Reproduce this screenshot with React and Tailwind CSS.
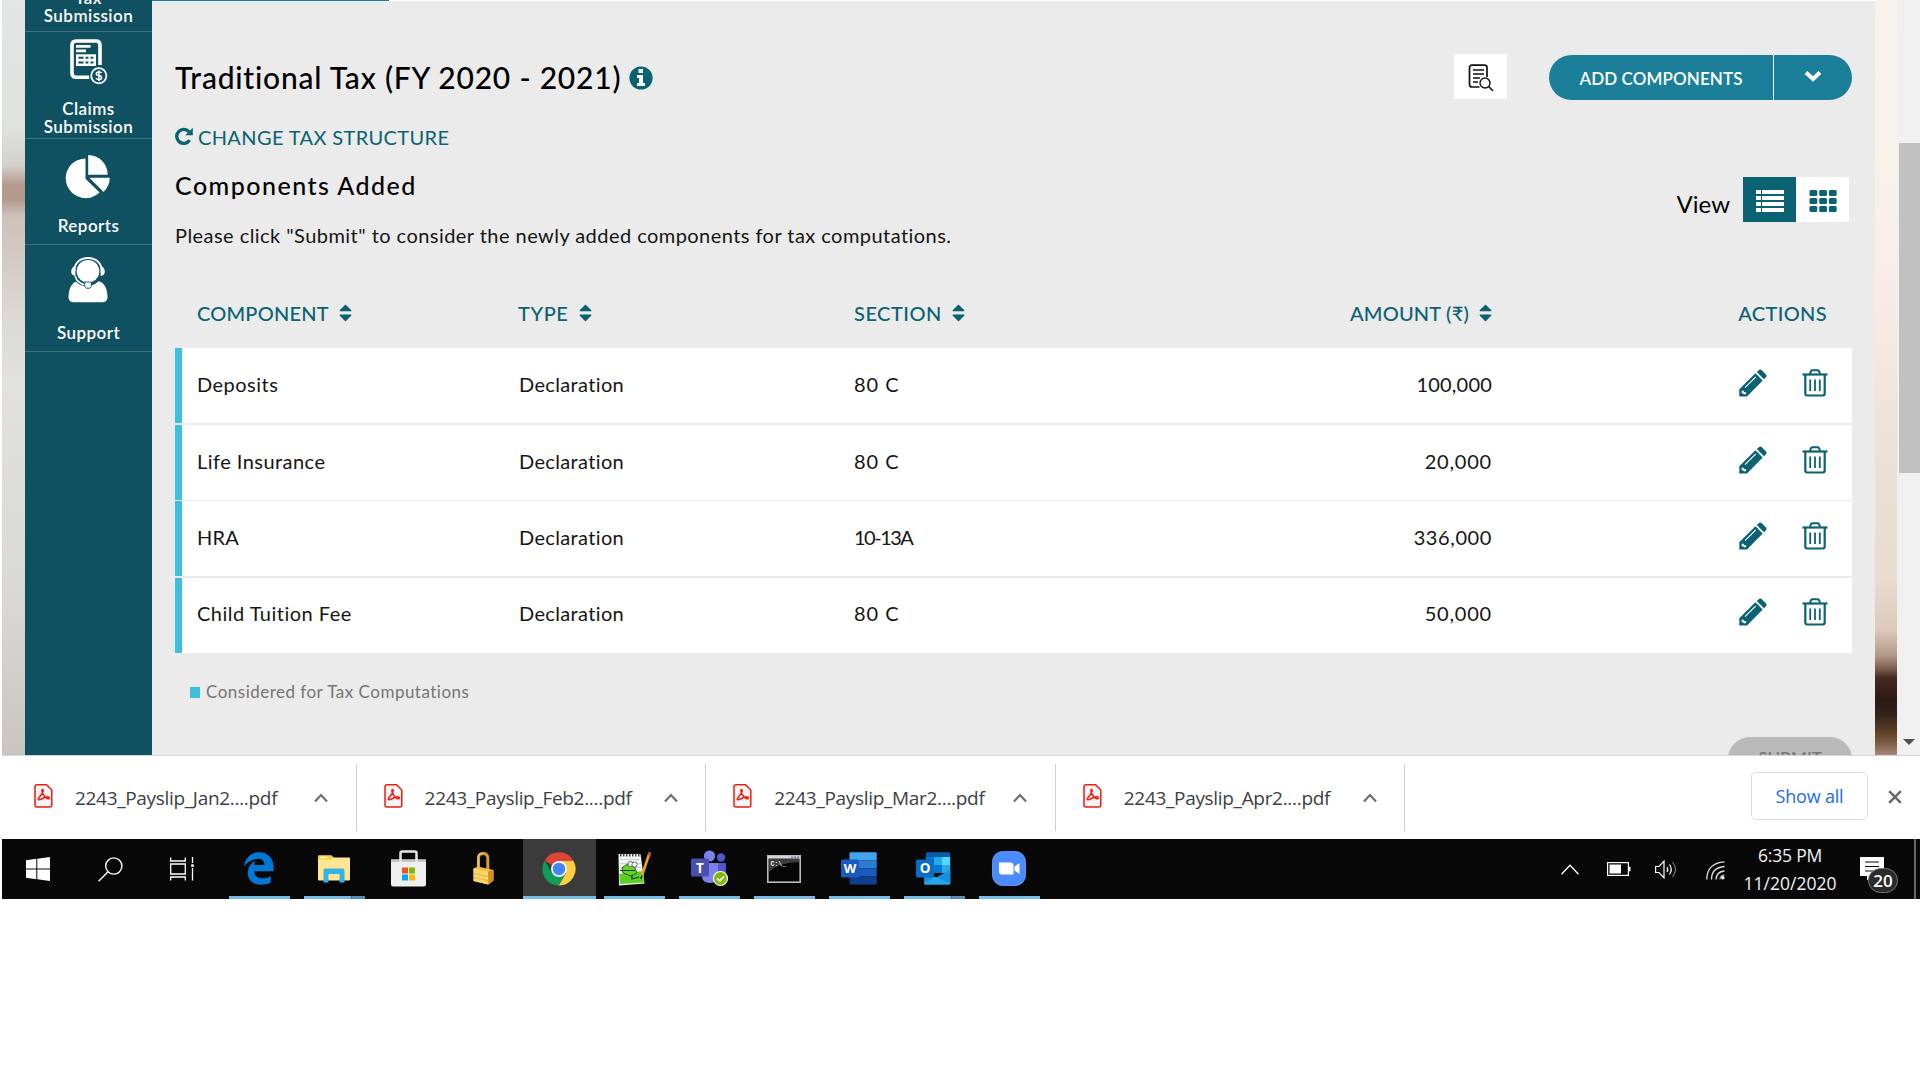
const ROWS = [
  { name: "Deposits", type: "Declaration", section: "80 C", amount: "100,000", layout: "mb-[2px] pb-[3px]", nameTracking: "tracking-[0.48px]", sectionTracking: "tracking-[0.95px]", amountTracking: "tracking-[0.2px]" },
  { name: "Life Insurance", type: "Declaration", section: "80 C", amount: "20,000", layout: "mb-[1px] pb-[4px]", nameTracking: "tracking-[0.46px]", sectionTracking: "tracking-[0.95px]", amountTracking: "tracking-[0.8px]" },
  { name: "HRA", type: "Declaration", section: "10-13A", amount: "336,000", layout: "mb-[2px] pb-[4px]", nameTracking: "tracking-[0.2px]", sectionTracking: "tracking-[-1.5px]", amountTracking: "tracking-[0.6px]" },
  { name: "Child Tuition Fee", type: "Declaration", section: "80 C", amount: "50,000", layout: "pb-[5px]", nameTracking: "tracking-[0.48px]", sectionTracking: "tracking-[0.95px]", amountTracking: "tracking-[0.8px]" },
];

const DOWNLOADS = ["2243_Payslip_Jan2....pdf", "2243_Payslip_Feb2....pdf", "2243_Payslip_Mar2....pdf", "2243_Payslip_Apr2....pdf"];

function SortIcon() {
  return (
    <svg width="13" height="18" viewBox="0 0 13 18" fill="#0a6273">
      <path d="M6.5 .4 12.4 6.3Q12.6 7.2 11.8 7.2H1.2Q.4 7.2 .6 6.3Z" />
      <path d="M6.5 17.4 12.4 11.4Q12.6 10.5 11.8 10.5H1.2Q.4 10.5 .6 11.4Z" />
    </svg>
  );
}

function PencilIcon() {
  return (
    <svg width="28" height="28" viewBox="0 0 28 28">
      <path d="M.3 27.6V20.2L16.4 4.3 23.7 11.5 8 27.6Z" fill="#0a6273" />
      <path d="M17.8 3 20.4.8Q21.5 0 22.6.9L27 5.6Q28 7 27.2 8L25 10.2Z" fill="#0a6273" />
      <path d="M2.6 22.2 4 21.2 5.2 23 7 23.2 7.2 25 5.6 25.6 2.6 23.8Z" fill="#fff" />
      <path d="M6 18.6 16.8 7.9" stroke="#fff" strokeWidth="1.1" fill="none" />
    </svg>
  );
}

function TrashIcon() {
  return (
    <svg width="26" height="28" viewBox="0 0 26 28" fill="none" stroke="#0a6273">
      <path d="M.5 5.5H25.5" strokeWidth="2.2" />
      <path d="M8 5 8.8 2.4Q9.1 1.2 10.3 1.2H15.7Q16.9 1.2 17.2 2.4L18 5" strokeWidth="2" />
      <path d="M3.3 6V24.6Q3.3 26.5 5.2 26.5H20.8Q22.7 26.5 22.7 24.6V6" strokeWidth="2.2" />
      <path d="M8.2 10.5V22M13 10.5V22M17.8 10.5V22" strokeWidth="1.8" />
    </svg>
  );
}

function ClaimsIcon() {
  return (
    <svg width="38" height="46" viewBox="0 0 38 46" fill="none" stroke="#fff">
      <path d="M19.5 38.2H6Q2 38.2 2 34.2V6Q2 2 6 2H26Q30 2 30 6V26" strokeWidth="3.6" />
      <path d="M6 7.3H20.5M6 11.8H16" strokeWidth="2.8" />
      <path d="M6 15.3H26V27H6Z" fill="#fff" stroke="none" />
      <path d="M8.4 18.8H13.5M8.4 23.4H13.5M15.5 18.8H18.4M15.5 23.4H18.4M20.5 18.8H23.4M20.5 23.4H23.4" stroke="#0f5061" strokeWidth="2" />
      <circle cx="28.8" cy="36.7" r="9.8" fill="#0f5061" stroke="none" />
      <circle cx="28.8" cy="36.7" r="7.6" strokeWidth="1.8" />
      <path d="M31.5 34Q30.8 32.9 28.9 32.9 26.3 32.9 26.3 34.8 26.3 36.3 28.9 36.6 31.6 37 31.6 38.7 31.6 40.6 28.9 40.6 26.8 40.6 26 39.2M28.9 31.4V42.2" strokeWidth="1.5" />
    </svg>
  );
}

function ReportsIcon() {
  return (
    <svg width="46" height="44" viewBox="0 0 46 44" fill="#fff">
      <path d="M20.5 3.4V23.8L34.6 37.6A20 19.9 0 1 1 20.5 3.4Z" />
      <path d="M23.2 0A19.6 19.8 0 0 1 42.7 19.8H23.2Z" />
      <path d="M24.4 22.8H44.8Q44.6 31 38.6 37Z" />
    </svg>
  );
}

function SupportIcon() {
  return (
    <svg width="40" height="46" viewBox="0 0 40 46">
      <path d="M12 23.5C4 24.5 .6 31 .5 40Q.5 45.3 6 45.3H34Q39.5 45.3 39.5 40C39.4 31 36 24.5 28 23.5Z" fill="#fff" />
      <circle cx="20" cy="14.8" r="14" fill="#0f5061" />
      <circle cx="20" cy="14.3" r="11.3" fill="#fff" />
      <path d="M6.3 14C6.3 5.6 12.4 1 20 1S33.7 5.6 33.7 14" fill="none" stroke="#fff" strokeWidth="1.9" />
      <path d="M7.4 8.5V19Q3.2 18.5 3.2 14.5T7.4 8.5ZM32.6 8.5V19Q36.8 18.5 36.8 14.5T32.6 8.5Z" fill="#fff" />
      <path d="M7 18.5Q9 26.5 17.5 27.8" fill="none" stroke="#0f5061" strokeWidth="3.4" />
      <path d="M7 18.5Q9 26.5 17.5 27.8" fill="none" stroke="#fff" strokeWidth="1.6" />
      <path d="M16.7 25H23.3V29.5L21.8 31.2H18.2L16.7 29.5Z" fill="#fff" stroke="#0f5061" strokeWidth=".9" />
    </svg>
  );
}

function PdfIcon() {
  return (
    <svg width="19" height="24" viewBox="0 0 19 24" fill="none" stroke="#f01a10">
      <path d="M3 .8H12.6L17.8 6V21Q17.8 23 15.8 23H3Q1 23 1 21V2.8Q1 .8 3 .8Z" fill="#f6f4f4" strokeWidth="1.5" />
      <path d="M4.2 15.5C3.5 13.5 8.5 11.5 9.2 6.8 9.3 5 7.6 5.2 7.9 7 8.5 10.5 11.5 14.2 14.2 14.7 16 14.8 15.5 12.7 13.7 12.7 10.5 12.6 5.5 16.9 4.2 15.5Z" strokeWidth="1.5" />
    </svg>
  );
}

function SideItem({ h, children }) {
  return <div className={"flex flex-col items-center border-b border-[#42727f] " + h}>{children}</div>;
}

function Sidebar() {
  const label = "text-center text-[17px] font-semibold leading-[18px] tracking-[0.45px]";
  return (
    <nav className="flex w-[127px] shrink-0 flex-col bg-[#0f5061] text-white">
      <SideItem h="h-[32px]">
        <span className={"-mt-[11px] " + label}>Tax<br />Submission</span>
      </SideItem>
      <SideItem h="h-[107px]">
        <div className="mt-[7px]"><ClaimsIcon /></div>
        <span className={"mt-[15px] " + label}>Claims<br />Submission</span>
      </SideItem>
      <SideItem h="h-[106px]">
        <div className="mr-[2px] mt-[16px]"><ReportsIcon /></div>
        <span className={"mt-[18px] " + label}>Reports</span>
      </SideItem>
      <SideItem h="h-[107px]">
        <div className="mr-[2px] mt-[12px]"><SupportIcon /></div>
        <span className={"mt-[21px] " + label}>Support</span>
      </SideItem>
    </nav>
  );
}

function Header() {
  return (
    <div className="mt-[53px] flex h-[46px] items-center">
      <h1 className="text-[30px] font-medium leading-none tracking-[0.78px] text-black">Traditional Tax (FY 2020 - 2021)</h1>
      <svg className="ml-[8px] mt-[2px]" width="24" height="24" viewBox="0 0 24 24">
        <circle cx="12" cy="12" r="11.6" fill="#0a6273" />
        <path d="M9.5 3H14V7H9.5ZM8 9H14V17H16V20H8V17H10V12H8Z" fill="#fff" />
      </svg>
      <button className="-mt-[1px] ml-auto flex h-[45px] w-[53px] items-center justify-center bg-white">
        <svg width="26" height="28" viewBox="0 0 26 28" fill="none" stroke="#111" className="ml-[1px] mt-[3px]">
          <path d="M11.5 23H4Q1.5 23 1.5 20.5V3.5Q1.5 1.2 4 1.2H16.5Q19 1.2 19 3.5V13" strokeWidth="1.7" />
          <path d="M5 6H16M5 10H16M5 14H12M5 18H10" strokeWidth="1.5" />
          <circle cx="17" cy="19" r="5" strokeWidth="1.4" />
          <path d="M20.7 22.5 25 27" strokeWidth="1.6" />
        </svg>
      </button>
      <div className="ml-[42px] mt-[1px] flex h-[45px] w-[303px] overflow-hidden rounded-[22.5px] bg-[#1b7f9a] text-white">
        <button className="flex w-[225px] items-center justify-center border-r border-white pt-[2px] text-[17px] font-semibold leading-none tracking-[0.1px]">ADD COMPONENTS</button>
        <button className="flex flex-1 items-center justify-center">
          <svg width="18" height="12" viewBox="0 0 18 12" className="-mt-[3px]"><path d="M2 2.5 9 9 16 2.5" fill="none" stroke="#fff" strokeWidth="4" /></svg>
        </button>
      </div>
    </div>
  );
}

const COLUMNS = "grid grid-cols-[321px_336px_319px_319px_1fr] items-center";

function TableHead() {
  return (
    <div className={COLUMNS + " mt-[20px] h-[68px] pb-[2px] pl-[22px] pr-[25px] text-[20px] font-medium leading-none text-[#0a6273]"}>
      <span className="flex items-center gap-[10px] tracking-[0.2px]">COMPONENT<SortIcon /></span>
      <span className="flex items-center gap-[10px] tracking-[0.6px]">TYPE<SortIcon /></span>
      <span className="flex items-center gap-[10px] tracking-[0.5px]">SECTION<SortIcon /></span>
      <span className="flex items-center justify-end gap-[10px] tracking-[0.2px]">AMOUNT (₹)<SortIcon /></span>
      <span className="text-right tracking-[0.35px]">ACTIONS</span>
    </div>
  );
}

function Row({ row }) {
  return (
    <div className={COLUMNS + " h-[75px] border-l-[7px] border-[#3dbfdf] bg-white pl-[15px] pr-[24px] text-[20px] leading-none text-[#151515] " + row.layout}>
      <span className={row.nameTracking}>{row.name}</span>
      <span className="pl-px tracking-[0.35px]">{row.type}</span>
      <span className={row.sectionTracking}>{row.section}</span>
      <span className={"text-right " + row.amountTracking}>{row.amount}</span>
      <span className="-mt-[2px] flex justify-end gap-[35px]"><PencilIcon /><TrashIcon /></span>
    </div>
  );
}

function Content() {
  return (
    <main className="flex h-full w-[1723px] shrink-0 flex-col bg-[#ebebeb]">
      <div className="flex h-px shrink-0 bg-white"><div className="w-[237px] bg-[#1b7f9a]" /></div>
      <div className="flex flex-1 flex-col px-[23px]">
        <Header />
        <a className="-ml-px mt-[23px] flex h-[28px] items-center text-[20px] leading-none tracking-[0.37px] text-[#0a6273]">
          <svg width="19" height="19" viewBox="0 0 19 19" className="mr-[5px] -mt-[1px]">
            <path d="M15.6 13.2A7 7 0 1 1 15 4.8" fill="none" stroke="#0a6273" strokeWidth="3.4" />
            <path d="M18.8 .8V8.3H11.3Z" fill="#0a6273" />
          </svg>
          CHANGE TAX STRUCTURE
        </a>
        <div className="mt-px flex h-[108px] justify-between">
          <div className="text-black">
            <h2 className="mt-[18px] text-[25px] font-medium leading-[30px] tracking-[1.48px]">Components Added</h2>
            <p className="mt-[21px] text-[20px] leading-[28px] tracking-[0.45px] text-[#151515]">Please click "Submit" to consider the newly added components for tax computations.</p>
          </div>
          <div className="mr-[3px] mt-[25px] flex h-[45px]">
            <span className="mr-[13px] mt-[9px] text-[24px] leading-[36px] text-black">View</span>
            <button className="flex w-[53px] items-center justify-center bg-[#0a6273]">
              <svg width="28" height="22" viewBox="0 0 28 22" fill="#fff" className="mt-[3px]">
                {[0, 6, 12, 18].map((y) => (
                  <g key={y}><rect x="0" y={y} width="5" height="4" /><rect x="6" y={y} width="22" height="4" /></g>
                ))}
              </svg>
            </button>
            <button className="flex w-[53px] items-center justify-center bg-white">
              <svg width="28" height="22" viewBox="0 0 28 22" fill="#0a6273" className="mt-[3px]">
                {[0, 8, 16].map((y) => [0.5, 10.2, 19.9].map((x) => <rect key={x + "-" + y} x={x} y={y} width="7.8" height="6" rx="1.5" />))}
              </svg>
            </button>
          </div>
        </div>
        <TableHead />
        {ROWS.map((row) => <Row key={row.name} row={row} />)}
        <div className="mt-[29px] flex h-[19px] items-center pl-[15px] text-[17px] leading-none tracking-[0.49px] text-[#757575]">
          <span className="mr-[6px] mt-[1px] h-[11px] w-[10px] bg-[#3dbfdf]" />
          Considered for Tax Computations
        </div>
        <button className="mt-[36px] flex h-[43px] w-[124px] shrink-0 items-center justify-center self-end rounded-t-[22px] bg-[#b9b9b9] text-[17px] font-medium leading-none text-[#757575]">SUBMIT</button>
      </div>
    </main>
  );
}

function Scrollbar() {
  return (
    <div className="flex w-[23px] shrink-0 flex-col items-end bg-[#f0f0f0]">
      <div className="mt-[143px] h-[330px] w-[21px] bg-[#c1c1c1]" />
      <svg width="12" height="6" viewBox="0 0 12 6" className="mb-[10px] mr-[5px] mt-auto"><path d="M0 0H12L6 6Z" fill="#505050" /></svg>
    </div>
  );
}

function DownloadBar() {
  return (
    <div className="flex h-[84px] items-center border-t border-[#d4d5d9] bg-white pl-[5px] font-['Open_Sans',sans-serif]">
      {DOWNLOADS.map((name) => (
        <div key={name} className="flex h-[67px] w-[349.6px] items-center border-r-[1.5px] border-[#cfcfcf] pl-[27px]">
          <span className="-mt-[3px] mr-[22px]"><PdfIcon /></span>
          <span className="mt-[2px] w-[239px] whitespace-nowrap text-[19px] leading-none tracking-[-0.31px] text-[#3c4043]">{name}</span>
          <svg width="14" height="10" viewBox="0 0 14 10"><path d="M1 8.5 7 2 13 8.5" fill="none" stroke="#6b6e72" strokeWidth="2.2" /></svg>
        </div>
      ))}
      <button className="-mt-[3px] ml-auto flex h-[48px] w-[117px] items-center justify-center rounded-[5px] border border-[#dadce0] text-[18px] leading-none tracking-[-0.2px] text-[#1a6cf0]">Show all</button>
      <svg width="14" height="14" viewBox="0 0 14 14" className="-mt-[2px] ml-[20px] mr-[18px]"><path d="M1.2 1.2 12.8 12.8M12.8 1.2 1.2 12.8" stroke="#66696d" strokeWidth="2.5" /></svg>
    </div>
  );
}

const ICONS = {
  edge: (
    <svg width="30" height="33" viewBox="0 0 30 33">
      <path d="M.2 14.5C1.2 6 7 .3 15 .3 24 .3 29.6 6.5 29.6 15V19.2H10.2C10.3 24 14 26.3 18.5 26.3 21.8 26.3 24.5 25.4 26.7 24V30.6C24 32 21 32.8 17 32.8 9 32.8 3.8 28 3.8 21 3.8 15.5 6.5 11.3 11.5 8.7 10.6 10 10.2 11.3 10.1 12.9H20.4C20.4 9 18.4 6.7 14.6 6.7 9 6.7 3.5 9.8 .2 14.5Z" fill="#0078d7" />
    </svg>
  ),
  folder: (
    <svg width="32" height="28" viewBox="0 0 32 28">
      <path d="M0 1.5Q0 .5 1 .5H13.5L15.5 2.5H31Q32 2.5 32 3.5V24.5Q32 25.5 31 25.5H1Q0 25.5 0 24.5Z" fill="#ffe694" />
      <path d="M0 1.5Q0 .5 1 .5H13.5Q15.5 2.5 13.5 4.5H0Z" fill="#fccb2f" />
      <path d="M2 2.5H9" stroke="#fff" strokeWidth="1.5" />
      <path d="M5.5 27.5V15.5Q5.5 13.5 7.5 13.5H24.5Q26.5 13.5 26.5 15.5V27.5H21.5V19H10.5V27.5Z" fill="#35b2e6" />
    </svg>
  ),
  store: (
    <svg width="35" height="37" viewBox="0 0 35 37">
      <path d="M0 9.5H35V34.5Q35 36.5 33 36.5H2Q0 36.5 0 34.5Z" fill="#efefef" />
      <path d="M0 9.5H35V12H0Z" fill="#c4c4c4" />
      <path d="M9.5 12V3Q9.5 1.5 11 1.5H24Q25.5 1.5 25.5 3V12" fill="none" stroke="#e6e6e6" strokeWidth="2.5" />
      <path d="M11 17.5H17V23.5H11Z" fill="#f25022" /><path d="M18 17.5H24V23.5H18Z" fill="#7fba00" />
      <path d="M11 24.5H17V30.5H11Z" fill="#00a4ef" /><path d="M18 24.5H24V30.5H18Z" fill="#ffb900" />
    </svg>
  ),
  lock: (
    <svg width="21" height="33" viewBox="0 0 21 33">
      <path d="M5.5 17V6Q5.5 1.5 10 1.5T14.8 6V19" fill="none" stroke="#d9a02c" strokeWidth="3" />
      <path d="M5 16V6Q5.2 1.2 10 1" fill="none" stroke="#f9dd80" strokeWidth="1" />
      <path d="M.5 16.5 5 14.5 20.5 18V28.5L15.5 32.5 .5 29Z" fill="#f3bb45" />
      <path d="M.5 16.5 15 19.5V32.5L.5 29Z" fill="#fbd56a" />
      <path d="M1 21.5 15 24.5M1 25.5 15 28.5" stroke="#eab043" strokeWidth="1" />
      <path d="M15 19.5 20.5 18V28.5L15.5 32.5Z" fill="#d48f22" />
    </svg>
  ),
  chrome: (
    <svg width="34" height="34" viewBox="0 0 34 34">
      <path d="M17 17 2.6 8.7A16.6 16.6 0 0 1 31.4 8.7Z" fill="#db4437" />
      <path d="M17 9H31.5A16.6 16.6 0 0 1 16.6 33.6L24 21Z" fill="#ffcd40" />
      <path d="M2.6 8.7A16.6 16.6 0 0 0 16.6 33.6L24 21 10 21Z" fill="#0f9d58" />
      <path d="M17 9H31.5L30.5 7 17 6Z" fill="#db4437" />
      <circle cx="17" cy="17" r="8" fill="#f1f1f1" /><circle cx="17" cy="17" r="6.2" fill="#4285f4" />
    </svg>
  ),
  notepad: (
    <svg width="34" height="34" viewBox="0 0 34 34">
      <path d="M1.5 2H23.5L27.5 31.5 2 33.5Z" fill="#f7f7f3" />
      <path d="M2.2 22 26 19 27 30.5 3 32Z" fill="#5ccf26" />
      <path d="M3 7.5H23M3 11.5H24M3 15.5H24" stroke="#b7d6e6" strokeWidth="1" />
      <path d="M3 3H23" stroke="#444" strokeWidth="3" strokeDasharray="1.5 1.5" />
      <path d="M5 16Q8 12 14 12L18 16 20 21 14 24 6 21Z" fill="#62d624" stroke="#1b3b12" strokeWidth=".8" />
      <circle cx="13.5" cy="12" r="2.6" fill="#fff" stroke="#444" strokeWidth=".8" /><circle cx="17.5" cy="12.5" r="2.6" fill="#fff" stroke="#444" strokeWidth=".8" />
      <path d="M3 18.5H18M15 23V27L22 25" stroke="#173c10" strokeWidth="1.2" fill="none" />
      <path d="M32.5 1 24.5 25" stroke="#e8a52a" strokeWidth="2.6" /><path d="M33.2 0 32.2 3.5" stroke="#b5473f" strokeWidth="3" /><path d="M24.9 23.5 24 27" stroke="#333" strokeWidth="1.5" />
    </svg>
  ),
  teams: (
    <svg width="38" height="37" viewBox="0 0 38 37">
      <circle cx="18.5" cy="6" r="5.6" fill="#7b83eb" /><circle cx="30" cy="7.5" r="4.2" fill="#5059c9" />
      <path d="M27 13H34Q35 13 35 14V24Q35 29 30 29H27Z" fill="#5059c9" />
      <path d="M11 13H27V24Q27 33 19 33T11 26Z" fill="#7b83eb" />
      <rect x="0" y="8.5" width="18" height="18" rx="1.5" fill="#474fb5" />
      <text x="9" y="22.5" textAnchor="middle" fontFamily="Open Sans, sans-serif" fontWeight="700" fontSize="13.5" fill="#fff">T</text>
      <circle cx="29.5" cy="28.5" r="7.6" fill="#fff" /><circle cx="29.5" cy="28.5" r="6.5" fill="#7fba00" />
      <path d="M26 28.5 28.7 31 33.2 26.3" fill="none" stroke="#fff" strokeWidth="1.9" />
    </svg>
  ),
  cmd: (
    <svg width="34" height="28" viewBox="0 0 34 28">
      <rect x=".8" y=".8" width="32.4" height="26.4" fill="#050505" stroke="#b9bcc2" strokeWidth="1.6" />
      <path d="M1 1H33V3.6H1Z" fill="#d3d5d9" /><path d="M24 2.2H32" stroke="#667" strokeWidth="1.2" strokeDasharray="2 1" />
      <path d="M2 4H32V7Q10 8 2 17Z" fill="#3c3c3c" />
      <text x="3.5" y="11" fontFamily="Liberation Mono, monospace" fontWeight="700" fontSize="6.5" fill="#f2f2f2">C:\_</text>
    </svg>
  ),
  word: (
    <svg width="36" height="33" viewBox="0 0 36 33">
      <path d="M8.5 1.5Q8.5 .3 9.7 .3H34.5Q35.7 .3 35.7 1.5V8.5H8.5Z" fill="#41a5ee" />
      <path d="M8.5 8.5H35.7V16.5H8.5Z" fill="#2b7cd3" /><path d="M8.5 16.5H35.7V24.5H8.5Z" fill="#185abd" />
      <path d="M8.5 24.5H35.7V31.3Q35.7 32.5 34.5 32.5H9.7Q8.5 32.5 8.5 31.3Z" fill="#103f91" />
      <rect x="0" y="7.5" width="18" height="18" rx="1.5" fill="#185abd" />
      <text x="9" y="21.2" textAnchor="middle" fontFamily="Open Sans, sans-serif" fontWeight="700" fontSize="13" fill="#fff">W</text>
    </svg>
  ),
  outlook: (
    <svg width="36" height="33" viewBox="0 0 36 33">
      <path d="M10 1.5Q10 .3 11.2 .3H33Q34.2 .3 34.2 1.5V5H10Z" fill="#0a5ea8" />
      <path d="M10 5H18V13H10Z" fill="#0078d4" /><path d="M18 5H26V13H18Z" fill="#28a8ea" /><path d="M26 5H34.2V13H26Z" fill="#50d9ff" />
      <path d="M10 13H18V21H10Z" fill="#0a5ea8" /><path d="M18 13H26V21H18Z" fill="#0078d4" /><path d="M26 13H34.2V21H26Z" fill="#28a8ea" />
      <path d="M8 20 20 25.5 34.5 17.5V31Q34.5 32.5 33 32.5H9.5Q8 32.5 8 31Z" fill="#1490df" />
      <path d="M19 25 34.5 31.5Q34 32.5 33 32.5H9.5Q8 32.5 8 31.5Z" fill="#28a8ea" />
      <rect x="0" y="7.5" width="18" height="18" rx="1.5" fill="#0a6cc4" />
      <text x="9" y="21.2" textAnchor="middle" fontFamily="Open Sans, sans-serif" fontWeight="700" fontSize="13.5" fill="#fff">O</text>
    </svg>
  ),
  zoom: (
    <svg width="34" height="35" viewBox="0 0 34 35">
      <rect x=".5" y=".5" width="33" height="34" rx="10" fill="#4a8cff" stroke="#6aa2ff" strokeWidth=".8" />
      <path d="M7 11.5H18.5Q21.5 11.5 21.5 14.5V23.5H10Q7 23.5 7 20.5Z" fill="#fff" />
      <path d="M22.5 15.5 27.5 12V23L22.5 19.5Z" fill="#fff" />
    </svg>
  ),
};

const APPS = [
  { id: "edge", line: "full" }, { id: "folder", line: "multi" }, { id: "store" }, { id: "lock" },
  { id: "chrome", line: "active" }, { id: "notepad", line: "full" }, { id: "teams", line: "full" },
  { id: "cmd", line: "full" }, { id: "word", line: "full" }, { id: "outlook", line: "multi" }, { id: "zoom", line: "full" },
];

function TaskbarApp({ app }) {
  const active = app.line === "active";
  return (
    <div className={"flex h-[60px] w-[75px] flex-col items-center " + (active ? "px-px" : "px-[7px]")}>
      <div className={"flex w-full flex-1 items-center justify-center pt-[2px] " + (active ? "bg-[#3b3b3b]" : "")}>
        <span className={app.id === "teams" ? "" : "mr-[2px]"}>{ICONS[app.id]}</span>
      </div>
      <div className="flex h-[3px] w-full">
        {app.line && <div className="flex-1 bg-[#76b9ed]" />}
        {app.line === "multi" && <div className="w-[14px] border-l border-[#3e6786] bg-[#5a8db6]" />}
      </div>
    </div>
  );
}

function Taskbar() {
  return (
    <footer className="flex h-[60px] items-center bg-[#080808] font-['Open_Sans',sans-serif] text-white">
      <svg width="24" height="24" viewBox="0 0 24 24" fill="#fff" className="ml-[24px]">
        <path d="M0 3.3 10.3 1.8V11.5H0ZM11.3 1.7 24 0V11.5H11.3ZM0 12.5H10.3V22.2L0 20.7ZM11.3 12.5H24V24L11.3 22.3Z" />
      </svg>
      <svg width="25" height="25" viewBox="0 0 25 25" fill="none" stroke="#fff" strokeWidth="1.4" className="ml-[48px]">
        <circle cx="15.8" cy="9" r="8.1" /><path d="M10 14.8 .6 24.3" />
      </svg>
      <svg width="25" height="24" viewBox="0 0 25 24" fill="none" stroke="#fff" strokeWidth="1.3" className="ml-[47px]">
        <path d="M.7 .5V4H15.3V.5M.7 23.5V20H15.3V23.5M.7 7H15.3V17H.7ZM22.5 0V6M22.5 11V23.5" /><rect x="21.2" y="7.3" width="2.6" height="2.6" fill="#fff" stroke="none" />
      </svg>
      <div className="ml-[27px] flex">
        {APPS.map((app) => <TaskbarApp key={app.id} app={app} />)}
      </div>
      <div className="ml-auto flex h-full items-center">
        <svg width="18" height="11" viewBox="0 0 18 11" fill="none" stroke="#fff" strokeWidth="1.3" className="mr-[28px]"><path d="M.5 10.3 9 1.3 17.5 10.3" /></svg>
        <svg width="24" height="14" viewBox="0 0 24 14" fill="none" stroke="#fff" strokeWidth="1.2" className="mr-[24px]">
          <rect x=".6" y=".6" width="20.8" height="12.8" /><path d="M2.5 2.5H14V11.5H2.5ZM22 4.8H23.5V9.2H22Z" fill="#fff" stroke="none" />
        </svg>
        <svg width="23" height="19" viewBox="0 0 23 19" fill="none" stroke="#fff" strokeWidth="1.2" className="mr-[28px]">
          <path d="M.6 6.5H4L9 1.2V17.8L4 12.5H.6Z" /><path d="M12 7Q13.5 9.5 12 12M14.5 4.5Q18 9.5 14.5 14.5" /><path d="M17.5 2Q23.5 9.5 17.5 17" stroke="#777" />
        </svg>
        <svg width="19" height="19" viewBox="0 0 19 19" fill="none" stroke="#ddd" strokeWidth="1.3" className="mr-[15px] mt-[2px]">
          <path d="M.8 18.5Q.8 2 18.5 .8M5.5 18.5Q5.5 6.5 18.5 5.5M10 18.5Q10.5 10.5 18.5 10" /><path d="M14 18.5Q14 14.5 18.5 14" stroke="#999" /><circle cx="16.8" cy="16.8" r="1.7" fill="#fff" stroke="none" />
        </svg>
        <div className="mr-[20px] flex w-[100px] flex-col items-center whitespace-nowrap text-[17.5px] leading-[28px] text-[#f2f2f2]">
          <span className="tracking-[-0.2px]">6:35 PM</span>
          <span>11/20/2020</span>
        </div>
        <div className="relative mr-[16px] h-[36px] w-[38px]">
          <svg width="24" height="24" viewBox="0 0 24 24" className="mt-[6px]">
            <path d="M0 0H24V19H12L7 23.5V19H0Z" fill="#fff" /><path d="M5 5H19M5 9.5H19M5 14H13" stroke="#0a0a0a" strokeWidth="1.2" />
          </svg>
          <span className="absolute left-[8px] top-[17px] flex h-[25px] w-[30px] items-center justify-center rounded-full border border-[#777] bg-[#2b2b2b] text-[17px] font-semibold leading-none">20</span>
        </div>
        <div className="mr-[4px] h-[60px] w-[2px] bg-[#6a6a6a]" />
      </div>
    </footer>
  );
}

export default function App() {
  return (
    <div className="h-[1080px] w-[1920px] overflow-hidden bg-white pl-[2px] font-['Lato',sans-serif]">
      <div className="flex h-[755px] overflow-hidden">
        <div className="w-[23px] shrink-0 bg-[linear-gradient(180deg,#e4e6e5_0px,#dfe1df_130px,#d3d1cc_165px,#b59a8b_185px,#b49a8c_200px,#cdc0b9_215px,#d3cac5_260px,#dcd9d5_320px,#e2e1df_380px,#dad8d5_600px,#c9c4c0_755px)]" />
        <Sidebar />
        <Content />
        <div className="w-[22px] shrink-0 bg-[linear-gradient(180deg,#faf3ed_0px,#f9f2e9_170px,#f9ece8_280px,#f4e8de_360px,#eadfd4_480px,#e8dccf_580px,#dcc9b9_630px,#b59a88_655px,#7d6254_668px,#45291f_678px,#2b1a15_700px,#33231a_715px,#5d4024_732px,#7a5a41_742px,#a68877_755px)]" />
        <Scrollbar />
      </div>
      <DownloadBar />
      <Taskbar />
    </div>
  );
}
